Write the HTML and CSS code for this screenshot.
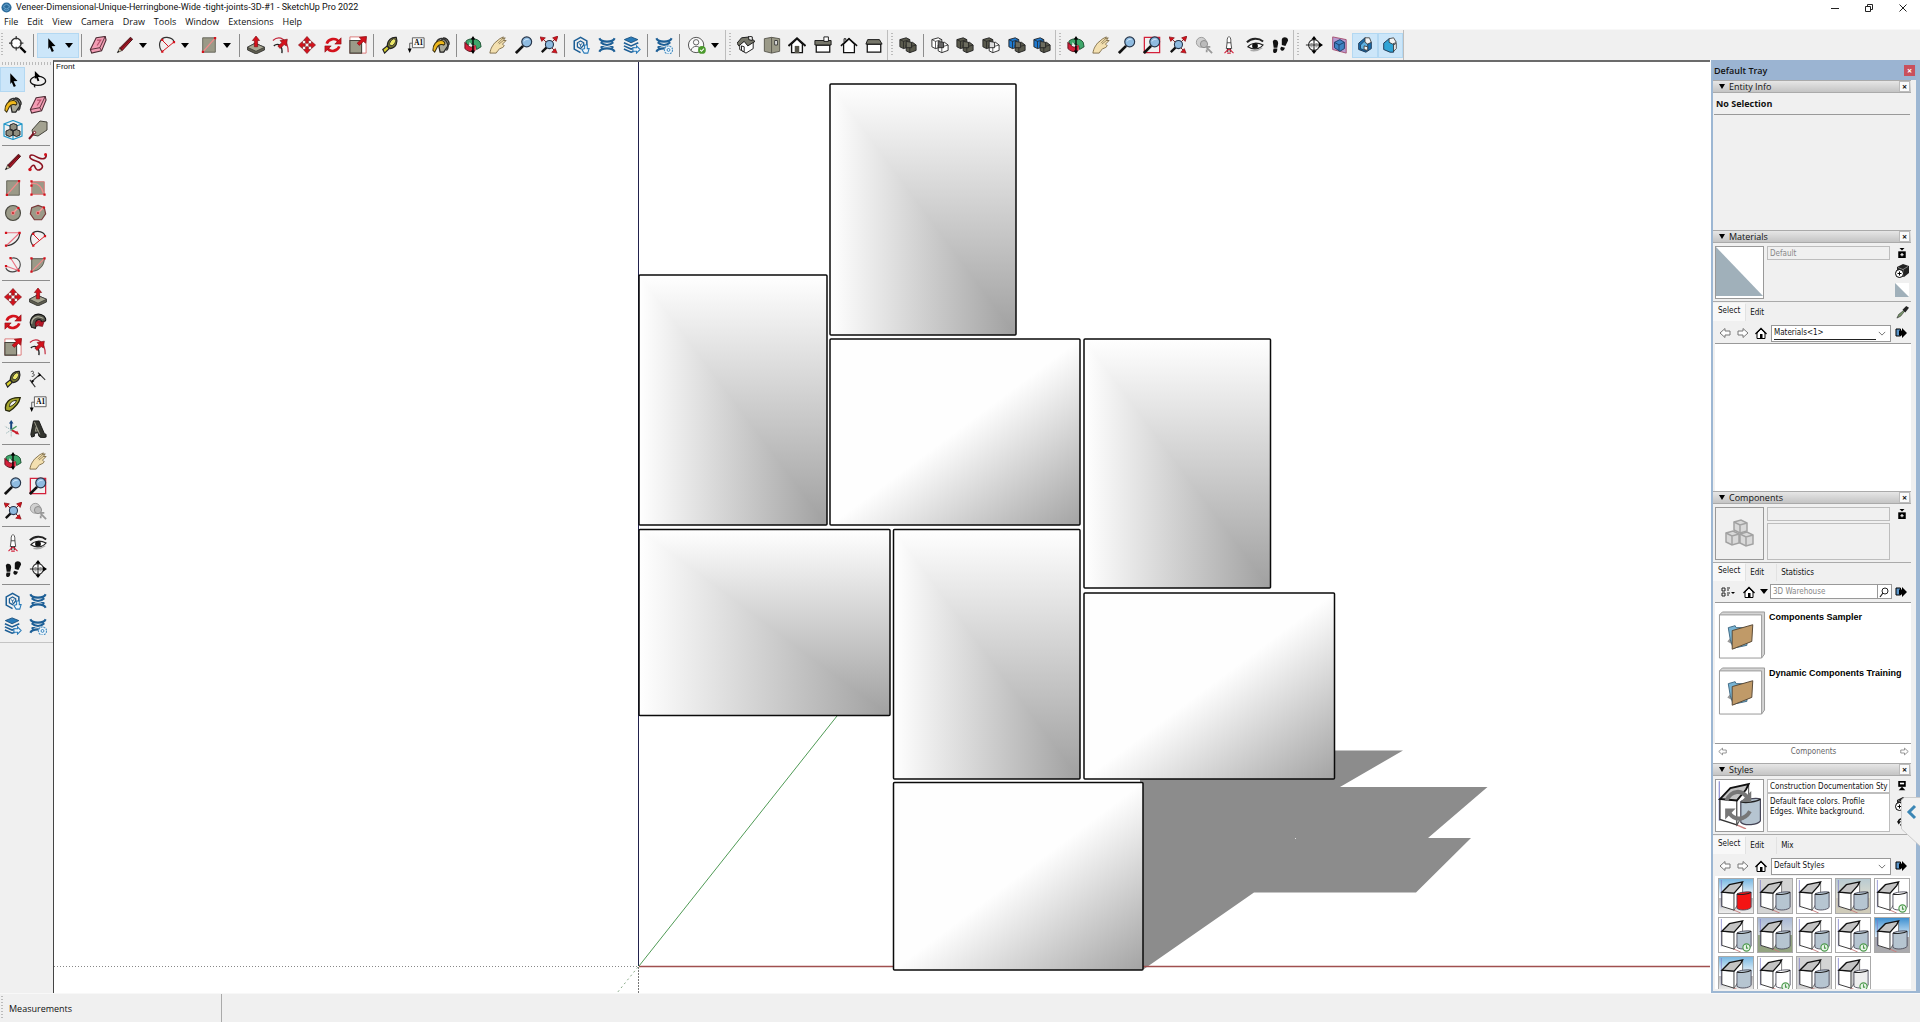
FILE: index.html
```
<!DOCTYPE html>
<html lang="en">
<head>
<meta charset="utf-8">
<title>Veneer-Dimensional-Unique-Herringbone-Wide -tight-joints-3D-#1 - SketchUp Pro 2022</title>
<link rel="stylesheet" href="styles.css">
</head>
<body>
<svg class="sprite" aria-hidden="true">
  <symbol id="search" viewBox="0 0 20 20"><circle cx="8" cy="8" r="5.500" fill="#fff" stroke="#333" stroke-width="1.600"/><path d="M8 0v4M8 12v4M0 8h4M12 8h4" stroke="#333" stroke-width="1.300"/><path d="M12.500 12.500l6 6" stroke="#000" stroke-width="2.600"/></symbol>
  <symbol id="arrow" viewBox="0 0 20 20"><path d="M7 2.500l8 8.500-4.300.4 2.500 5.300-2.300 1-2.300-5.200L7 14.500z" fill="#000"/></symbol>
  <symbol id="lasso" viewBox="0 0 20 20"><ellipse cx="10" cy="11" rx="8.500" ry="5" fill="none" stroke="#111" stroke-width="1.500"/><path d="M7 15c-1 1-2 2 0 3" fill="none" stroke="#111" stroke-width="1.300"/><path d="M6.500 0l6.500 6.500-3 .3 1.500 4-2 .7-1.500-4-1.500 1.500z" fill="#000"/></symbol>
  <symbol id="eraser" viewBox="0 0 20 20"><path d="M8 2l10-1.500 1 4-5 12L3 19l-1.500-4z" fill="#f29db4" stroke="#4d2a33" stroke-width="1.200"/><path d="M1.500 15l10.500-2L18 .5M12 13l2 3.500" fill="none" stroke="#4d2a33"/><path d="M9 4.500l4 0-4 6" fill="none" stroke="#b5526c" stroke-width="1.300"/></symbol>
  <symbol id="pencil" viewBox="0 0 20 20"><path d="M1.500 18.500l2.500-5 3 2.500z" fill="#d9c8a5" stroke="#333" stroke-width=".8"/><path d="M4 13.500L16 1.500l2.500 2L7 16z" fill="#b71525" stroke="#3a1115"/><path d="M15 2.500l2.500 2.200M5 14.500L16 3.500" stroke="#3a1115"/><path d="M1.500 18.500l1-2 1 1z" fill="#000"/></symbol>
  <symbol id="freehand" viewBox="0 0 20 20"><path d="M2 17c2-4 4-5 5-2s3 4 6 2c4-3-1-7-5-8C4 8 1 6 2 4c2-3 6 1 9 2 5 2 8 0 7-4" fill="none" stroke="#8c1220" stroke-width="1.600"/><circle cx="2" cy="17.500" r="1.700" fill="#d4121c"/><circle cx="17.500" cy="2.500" r="1.500" fill="#d4121c"/></symbol>
  <symbol id="rect" viewBox="0 0 20 20"><path d="M3 2h14v16H3z" fill="#9b9a88" stroke="#5f5e52"/><path d="M3 18L17 2" stroke="#f28a8a" stroke-width="1.400"/><path d="M2 16.500h2.500V19H2zM15.500 1H18v2.500h-2.500z" fill="#d4121c"/></symbol>
  <symbol id="rrect" viewBox="0 0 20 20"><path d="M3 3h14v14H3z" fill="#9b9a88" stroke="#d97070"/><path d="M3 5c7-1 11 3 13 11" fill="none" stroke="#f28a8a" stroke-width="1.500"/><path d="M1.500 1.500H4V4H1.500zM1.500 6H4v2.500H1.500zM1.500 16H4v2.500H1.500zM16 16h2.500v2.500H16z" fill="#d4121c"/></symbol>
  <symbol id="circle" viewBox="0 0 20 20"><circle cx="10" cy="10" r="8.300" fill="#9b9a88" stroke="#4c4b42" stroke-width="1.300"/><path d="M10 10l5.500-5.500" stroke="#ff9c9c" stroke-width="1.500"/><circle cx="10" cy="10" r="2" fill="none" stroke="#f28a8a"/><circle cx="10" cy="10" r="1" fill="#d4121c"/><circle cx="16" cy="4.500" r="1.400" fill="#d4121c"/></symbol>
  <symbol id="polygon" viewBox="0 0 20 20"><path d="M10 1.500l7 2.500 1.500 7-4.500 6.500H6L1.500 11 3 4z" fill="#9b9a88" stroke="#7a3a3a" stroke-width="1.300"/><path d="M10 10l6-6" stroke="#ff9c9c" stroke-width="1.500"/><circle cx="10" cy="10" r="2" fill="none" stroke="#f28a8a"/><circle cx="10" cy="10" r="1" fill="#d4121c"/><circle cx="16.500" cy="4" r="1.400" fill="#d4121c"/></symbol>
  <symbol id="arc1" viewBox="0 0 20 20"><path d="M17.500 3c0 8-7 14-15 14.500" fill="none" stroke="#333" stroke-width="1.300"/><path d="M2 3h15.500L2.500 17.500" fill="none" stroke="#e87080" stroke-width="1.200"/><path d="M1 2h2.500v2.500H1zM16 2h2.500v2.500H16zM1 16h2.500v2.500H1z" fill="#d4121c"/></symbol>
  <symbol id="arc2" viewBox="0 0 20 20"><path d="M4 17C-1 9 3 1 10 1.500c4 .3 7 2 8 5" fill="none" stroke="#333" stroke-width="1.300"/><path d="M4.500 17.500L18 6.500M4.500 4.500l7 7" fill="none" stroke="#d4121c" stroke-width="1.100"/><path d="M3.500 16h2.500v2.500H3.500zM16.500 5.500H19V8h-2.500zM3.500 3H6v2.500H3.500z" fill="#d4121c"/></symbol>
  <symbol id="arc3" viewBox="0 0 20 20"><path d="M8 2.500c8-2 12 5 9 11-4 6-12 5-15 0" fill="none" stroke="#444" stroke-width="1.200"/><path d="M7.500 2.500L16 16M2 11l14 5" stroke="#e87080" stroke-width="1.200"/><path d="M6 1h2.500v2.500H6zM1 10h2.500v2.500H1zM15 15h2.500v2.500H15z" fill="#d4121c"/></symbol>
  <symbol id="pie" viewBox="0 0 20 20"><path d="M3 3h14c0 8-6 14-14 14z" fill="#9b9a88" stroke="#4c4b42"/><path d="M3 17L17 3" stroke="#f28a8a" stroke-width="1.200"/><path d="M1.500 1.500H4V4H1.500zM16 1.500h2.500V4H16zM1.500 16H4v2.500H1.500z" fill="#d4121c"/></symbol>
  <symbol id="pushpull" viewBox="0 0 20 20"><path d="M.5 12.500L9 8l10.500 4.500v3L10 20 .5 15.500z" fill="#5f5e50" stroke="#222" stroke-width=".8"/><path d="M.5 12.500L9 8l10.500 4.500L10 17z" fill="#a8a792" stroke="#333" stroke-width=".8"/><path d="M10 0l4 5h-2.200V12H8.200V5H6z" fill="#d4121c" stroke="#7c0b12" stroke-width=".7"/></symbol>
  <symbol id="offset" viewBox="0 0 20 20"><path d="M1 5C8-1 18 3 18 18" fill="none" stroke="#c3283c" stroke-width="1.300"/><path d="M2 11c5-4 10 0 9 8" fill="none" stroke="#222" stroke-width="1.500"/><path d="M17 3.500l-1 7.500-2.500-1.500L9 14l-2.500-3L11 7.500 9 5z" fill="#d4121c" stroke="#7c0b12" stroke-width=".7"/></symbol>
  <symbol id="move" viewBox="0 0 20 20"><path id="mv" d="M10 .5l4 4.500h-2.500v3h-3V5H6z" fill="#d4121c" stroke="#7c0b12" stroke-width=".7"/><use href="#mv" transform="rotate(90 10 10)"/><use href="#mv" transform="rotate(180 10 10)"/><use href="#mv" transform="rotate(270 10 10)"/></symbol>
  <symbol id="rotate" viewBox="0 0 20 20"><path d="M3 8.500C5 3 13 1.500 16 6M17 11.500C15 17 7 18.500 4 14" fill="none" stroke="#d4121c" stroke-width="3"/><path d="M19 2v7h-7zM1 18v-7h7z" fill="#d4121c" stroke="#7c0b12" stroke-width=".6"/></symbol>
  <symbol id="scale" viewBox="0 0 20 20"><path d="M1 1h18v18H1z" fill="#fff" stroke="#d97070"/><path d="M1 5h13v14H1z" fill="#9b9a88" stroke="#44433b" stroke-width="1.200"/><path d="M19.500.5l-1 7.500-2.500-2-4.500 4.500-2.500-2.500L13.500 4l-2-2.500z" fill="#d4121c" stroke="#7c0b12" stroke-width=".7"/></symbol>
  <symbol id="followme" viewBox="0 0 20 20"><path d="M3 16C-2 7 6-1 14 2c5 2 5 6 4 7l-4 1c0-4-8-4-6 4l-1 3z" fill="#55564c" stroke="#111" stroke-width="1.200"/><path d="M3 12C3 5 9 2 16 6" fill="none" stroke="#b9b9a7" stroke-width="1.200"/><path d="M7 14c-1-6 5-7 7-4l3-1-2 6-6-1 2-2c-1-1-2 0-2 3z" fill="#b71525" stroke="#4d0910" stroke-width=".6"/></symbol>
  <symbol id="tape" viewBox="0 0 20 20"><path d="M2 15l5-4 2 3-5 5z" fill="#d8d12c" stroke="#222" stroke-width="1.300"/><path d="M7 11C7 4 12 1 17 1.500 19 7 17 13 10 14z" fill="#77772d" stroke="#222" stroke-width="1.300"/><ellipse cx="13" cy="7" rx="2.600" ry="4.500" transform="rotate(38 13 7)" fill="#ece86a" stroke="#333"/></symbol>
  <symbol id="text" viewBox="0 0 20 20"><path d="M6 2h13v11H6z" fill="#f8f8f8" stroke="#555"/><path d="M6 8H3v7" fill="none" stroke="#555"/><path d="M.8 14h4.400L3 19z" fill="#000"/><text x="8" y="10.500" font-family="Liberation Serif,serif" font-weight="bold" font-size="8">A1</text></symbol>
  <symbol id="paint" viewBox="0 0 20 20"><path d="M7 8l6-6c3 0 6 3 6 7l-6 9H9z" fill="#aaa99a" stroke="#222" stroke-width="1.400"/><path d="M5 7c2-5 8-6 11-1s2 8 0 10" fill="none" stroke="#333" stroke-width="1.600"/><path d="M10 5c-5 0-9 4-9 11l2 2 3-6c2-3 6-3 7-2 3-2 0-5-3-5z" fill="#efb81c" stroke="#3d3210" stroke-width="1.200"/></symbol>
  <symbol id="comp" viewBox="0 0 20 20"><path d="M10 .5l9 3.500v12L10 19.500 1 16V4zM1 4l9 3 9-3M10 7v12" fill="none" stroke="#2298c9" stroke-width="1.200"/><path d="M7 5l3.500-1.500L14 5v4l-3.500 1.500L7 9zM3 11l3.500-1.500L10 11v4l-3.500 1.500L3 15zM10 11l3.500-1.500L17 11v4l-3.500 1.500L10 15z" fill="#908f80" stroke="#222"/></symbol>
  <symbol id="tag" viewBox="0 0 20 20"><path d="M4 10L12 1l7 1v8l-9 6-5-1z" fill="#a3a291" stroke="#44433b"/><path d="M1 19l5-6" stroke="#7c1220" stroke-width="2"/><circle cx="6.500" cy="12.500" r="1.200" fill="#fff" stroke="#7c1220"/></symbol>
  <symbol id="dims" viewBox="0 0 20 20"><path d="M3 13l9-8M1 11l6 8M10 3l8 8" stroke="#333" stroke-width="1.200"/><path d="M3 11l3 1-3 3zM12 3.500l1.500 3-4 1z" fill="#000"/><path d="M2 2c3-2 4 1 2 2 3 0 2 4-1 3" fill="none" stroke="#333"/></symbol>
  <symbol id="protractor" viewBox="0 0 20 20"><path d="M2 17C0 9 6 2 18 3c-1 5-4 10-12 15z" fill="#a7a72e" stroke="#26260b" stroke-width="1.500"/><path d="M6 13c0-4 3-7 8-7-1 3-4 6-8 7z" fill="#f0f0f0" stroke="#26260b"/></symbol>
  <symbol id="axes" viewBox="0 0 20 20"><path d="M8 11V3" stroke="#16457f" stroke-width="2.200"/><path d="M8 0l2.500 4h-5z" fill="#16457f"/><path d="M8 11l6 3" stroke="#c81c2a" stroke-width="2"/><path d="M17 16l-4.500-.5 2-3.500z" fill="#c81c2a"/><path d="M8 11l6-4" stroke="#4b9b5d" stroke-width="1.500"/><path d="M8 11v8M8 11L1 7M8 11l-6 4" stroke="#8aa" stroke-dasharray="1.500 1"/></symbol>
  <symbol id="a3d" viewBox="0 0 20 20"><path d="M5 1h6l6 14 2 1v3l-5 1-3-2-1-4-4 1v3l-3 1-1-3z" fill="#34352f" stroke="#111"/><path d="M6 2l6 14M8 8l2 4-3 .5z" fill="none" stroke="#a3a291"/></symbol>
  <symbol id="orbit" viewBox="0 0 20 20"><path d="M2 6c3-4 13-4 16 1l1 5-5 3-1-4C9 8 6 8 4 11z" fill="#3fa76b" stroke="#174a2b"/><path d="M1 7l3 3c3 3 5 3 6 1v6c-3 1-6 0-9-3z" fill="#d4203a" stroke="#5b0d18"/><path d="M10 11l3-1v6l-3 1z" fill="#d4203a"/><path d="M10 2v16" stroke="#000" stroke-width="1.500"/><path d="M10 0l2.500 4h-5zM10 20l2.500-4h-5z" fill="#000"/><path d="M6 7l2 2-2 2z" fill="#fff"/></symbol>
  <symbol id="pan" viewBox="0 0 20 20"><path d="M1 19c1-6 3-8 5-11l6-5 4-2-1 2 3-1-2 3 3 0-4 4 2 2c-2 3-5 2-7 5l-2 3z" fill="#f3e0b0" stroke="#7c6a45"/><path d="M10 8l5-5M11 9l5-4" stroke="#7c6a45" stroke-width=".8"/></symbol>
  <symbol id="zoom" viewBox="0 0 20 20"><path d="M9 11l-8 8" stroke="#111" stroke-width="3"/><circle cx="13" cy="6.500" r="5.500" fill="#8fbbe0" stroke="#26354a" stroke-width="1.300"/><path d="M10 6c1-2 3-3 5-2" fill="none" stroke="#dceeff"/></symbol>
  <symbol id="zoomwin" viewBox="0 0 20 20"><path d="M1.500 1.500h17v17h-17z" fill="none" stroke="#d4203a" stroke-width="1.400"/><use href="#zoom"/></symbol>
  <symbol id="extents" viewBox="0 0 20 20"><path d="M8 12l-6 6" stroke="#111" stroke-width="2.600"/><path d="M3 3l14 14M17 3l-4 4" stroke="#7c0b12"/><circle cx="10.500" cy="9.500" r="4.500" fill="#8fbbe0" stroke="#26354a" stroke-width="1.200"/><path d="M0 1l6 1-4 4zM20 0l-6 2 4 4zM19 19l-6-1 4-4z" fill="#d4121c" stroke="#7c0b12" stroke-width=".7"/></symbol>
  <symbol id="prev" viewBox="0 0 20 20"><circle cx="7" cy="7" r="5.500" fill="#d0d0d0" stroke="#999"/><circle cx="10" cy="9" r="4" fill="#bbb" stroke="#888"/><path d="M13 13l6 6M12 12l5 0M13 15l0 3" stroke="#999" stroke-width="2"/></symbol>
  <symbol id="position" viewBox="0 0 20 20"><path d="M8 7c0-2-.5-5 2-6.500 2.500 1.500 2 4.500 2 6.500l1 7H7z" fill="#fff" stroke="#444"/><path d="M7.500 7.500h5" stroke="#444"/><path d="M8.500 13.500v4M11.500 13.500v4" stroke="#222" stroke-width="1.500"/><path d="M5 19l4-4 2 0 4 4M8 19h4" fill="none" stroke="#d4203a" stroke-width="1.200"/></symbol>
  <symbol id="look" viewBox="0 0 20 20"><path d="M1 7C6 2 14 2 19 6" fill="none" stroke="#222" stroke-width="2.200"/><path d="M2 12c4-5 11-5 17-2-4 5-11 6-17 2z" fill="#fff" stroke="#222" stroke-width="1.200"/><circle cx="10" cy="11" r="3.200" fill="#111"/><path d="M5 16c4 1 9 0 13-3" stroke="#aaa" stroke-width="1.500" fill="none"/></symbol>
  <symbol id="walk" viewBox="0 0 20 20"><path d="M2 6c1-3 6-2 6 2l-1 5H3zM3 14h4c0 4-1 5-3 5s-2-3-1-5zM12 4c1-4 7-3 7 1l-3 6-4-1zM11.500 12l4 1c-1 3-2 4-4 3s-1-3 0-4z" fill="#111"/></symbol>
  <symbol id="section" viewBox="0 0 20 20"><circle cx="10" cy="10" r="6" fill="#fff" stroke="#222" stroke-width="1.200"/><path d="M1 10h17M10 3v14" stroke="#222" stroke-width="1.200"/><path d="M20 10l-4.500-3v6zM10 0l3 4H7zM10 20l3-4H7z" fill="#000"/><path d="M6 8.500h2.500M11.500 8.500H14M6 12h2.500M11.500 12H14" stroke="#777"/></symbol>
  <symbol id="wh" viewBox="0 0 20 20"><path d="M16.500 10V5.500L9.500 1.500 2.500 5.500v9l7 4" fill="none" stroke="#1d5f96" stroke-width="1.700"/><path d="M13 10V7.500l-3.500-2-3.500 2V12l3.500 2z" fill="none" stroke="#1d5f96" stroke-width="1.400"/><path d="M7.500 8.500l2 1 2-1M9.500 9.500v2.500" stroke="#1d5f96" fill="none"/><path d="M14 10h3v4h2l-1.500 5h-4L11 15l3-1z" fill="#eef6fc" stroke="#2a7bb8" stroke-width="1.200"/></symbol>
  <symbol id="ext" viewBox="0 0 20 20"><path d="M1.500 2.500c2 5 15 5 17 0M3 7c4 4 10 4 14 0M3 13c4-4 10-4 14 0M1.500 17.500c2-5 15-5 17 0" fill="none" stroke="#1d5f96" stroke-width="2.300"/></symbol>
  <symbol id="layers" viewBox="0 0 20 20"><path d="M9 1l7.500 3L9 7.500 1.500 4z" fill="#2a7bb8" stroke="#174f7e"/><path d="M1 7.500l8 3.500 8-3.500M1 11l8 3.500 4-1.500M1 14.500l8 3.500 3-1" fill="none" stroke="#1d5f96" stroke-width="1.700"/><path d="M11 13h4v-2l4 4-4 4v-2h-4z" fill="#eef6fc" stroke="#2a7bb8" stroke-width="1.200"/></symbol>
  <symbol id="extmgr" viewBox="0 0 20 20"><use href="#ext"/><circle cx="15" cy="15.500" r="4.500" fill="#eef6fc" stroke="#4a8fc1" stroke-width="1.300" stroke-dasharray="2.200 .9"/><circle cx="15" cy="15.500" r="1.600" fill="none" stroke="#2a7bb8"/></symbol>
  <symbol id="account" viewBox="0 0 20 20"><circle cx="9" cy="10" r="8.500" fill="#fafafa" stroke="#555" stroke-width="1.100"/><circle cx="9" cy="7" r="3" fill="none" stroke="#555"/><path d="M3.500 16c1-6 10-6 11 0" fill="none" stroke="#555"/><circle cx="15.500" cy="15.500" r="4.300" fill="#4b9a2d"/><path d="M13.500 15.500l1.500 1.500 2.700-3" fill="none" stroke="#fff" stroke-width="1.200"/></symbol>
  <symbol id="iso" viewBox="0 0 20 20"><path d="M3 8v7l7 4 8-5V7l-7-3z" fill="#fff" stroke="#111"/><path d="M0 8l5-6 9-1 6 5-8 5-4-5-6 5z" fill="#77776b" stroke="#111"/><path d="M13 0l4 1v4l-4-1z" fill="#eee" stroke="#111"/><path d="M5 11v5l3 1.500V12z" fill="#fff" stroke="#111"/></symbol>
  <symbol id="topv" viewBox="0 0 20 20"><path d="M1.500 3l8-1.500 9 1.500v14l-9 2-8-2z" fill="#9b9a88" stroke="#55544a"/><path d="M9.500 1.500V19" stroke="#55544a"/><path d="M13 5h3v5h-3z" fill="#eee" stroke="#333"/></symbol>
  <symbol id="frontv" viewBox="0 0 20 20"><path d="M4 9v9.500h12V9l-6-6z" fill="#fff" stroke="#111" stroke-width="1.500"/><path d="M.5 11L10 2.500 19.500 11" fill="none" stroke="#111" stroke-width="2.200"/><path d="M7.500 11h5v8h-5z" fill="#55544a"/></symbol>
  <symbol id="rightv" viewBox="0 0 20 20"><path d="M2.500 10h15v8h-15z" fill="#fff" stroke="#111" stroke-width="1.400"/><path d="M1 5h18v5H1z" fill="#77776b" stroke="#111"/><path d="M11 1h5v5h-5z" fill="#fff" stroke="#111"/></symbol>
  <symbol id="backv" viewBox="0 0 20 20"><path d="M4 9v9.500h12V9l-6-6z" fill="#fff" stroke="#111" stroke-width="1.400"/><path d="M1 11l9-8 9 8" fill="none" stroke="#111" stroke-width="1.600"/><path d="M4.500 7V3h2v2" fill="none" stroke="#111"/></symbol>
  <symbol id="leftv" viewBox="0 0 20 20"><path d="M2.500 9h15v9h-15z" fill="#fff" stroke="#111" stroke-width="1.400"/><path d="M3 4h13l3 5H1z" fill="#77776b" stroke="#111"/></symbol>
  <symbol id="solid" viewBox="0 0 20 20"><path d="M1 4l7-2 4 2v8l-7 2-4-2z" fill="var(--a,#5a5a4d)" stroke="#222"/><path d="M8 10l7-3 4 3v6l-7 2.500-4-2z" fill="var(--b,#5a5a4d)" stroke="#222"/><path d="M8 10l4 2 7-2M12 12v6.500M1 4l4 2 7-2M5 6v8" fill="none" stroke="#222" stroke-width=".8"/><path d="M8 6l6 1v6H8z" fill="var(--c,#6c6c5f)" stroke="#222"/></symbol>
  <symbol id="disp" viewBox="0 0 20 20"><path d="M3 1l15 3v15L3 15z" fill="#b79bd0" stroke="#a44a6b"/><path d="M5 7l6-3 5 3v7l-5 3-6-4z" fill="#3f83c4" stroke="#1b3c66"/><path d="M5 7l5 3 6-3M10 10v6" fill="none" stroke="#1b3c66"/></symbol>
  <symbol id="cuts" viewBox="0 0 20 20"><path d="M3 8l7-6 7 5v7l-6 4-8-3z" fill="#1b6fae" stroke="#16304d"/><path d="M5 10l5-5 3 2v8l-3 1-5-2z" fill="#5fb0e0" stroke="#16304d" stroke-width=".8"/><path d="M10 2l5 0 2 5-4 2-3-2zM9 11l4 1v4l-4-1z" fill="#f3f3f3" stroke="#333" stroke-width=".9"/></symbol>
  <symbol id="cutfill" viewBox="0 0 20 20"><path d="M3 8l6-5 5 4v11l-4 0-7-3z" fill="#2fa4d6" stroke="#16304d"/><path d="M9 3l5-1 3 5-4 2-4-2zM14 10l3-2v6l-3 3z" fill="#f3f3f3" stroke="#333" stroke-width=".9"/></symbol>
  <symbol id="navback" viewBox="0 0 12 12"><path d="M1 6l5-4.500V4h5v4H6v2.500z" fill="#fdfdfd" stroke="#777"/></symbol>
  <symbol id="navfwd" viewBox="0 0 12 12"><path d="M11 6L6 1.500V4H1v4h5v2.500z" fill="#fdfdfd" stroke="#777"/></symbol>
  <symbol id="home" viewBox="0 0 12 12"><path d="M2 6v5.500h8V6L6 2z" fill="#fff" stroke="#000"/><path d="M.5 7L6 1.500 11.500 7" fill="none" stroke="#000" stroke-width="1.400"/><path d="M5 7h2.500v4.500H5z" fill="#000"/></symbol>
  <symbol id="details" viewBox="0 0 12 12"><path d="M1 2h4.500v7H1z" fill="#5a94c8" stroke="#000"/><path d="M4 3.500h3V1l5 5-5 5V8.500H4z" fill="#000"/></symbol>
  <symbol id="pinbox" viewBox="0 0 12 12"><path d="M3 0h6L6 3z" fill="#000"/><path d="M1.500 4h9v8h-9z" fill="#000"/><path d="M4 8h4M6 6v4" stroke="#fff" stroke-width="1.300"/></symbol>
  <symbol id="cubeplus" viewBox="0 0 14 14"><path d="M2 3l6-3 6 2v7l-5 4-7-3z" fill="#222"/><path d="M3 3.500l5 2 5-3M8 5v7" stroke="#999" fill="none" stroke-width=".8"/><circle cx="4.500" cy="9.500" r="4" fill="#fff" stroke="#000"/><path d="M2.500 9.500h4M4.500 7.500v4" stroke="#000"/></symbol>
  <symbol id="dropper" viewBox="0 0 14 14"><path d="M1 13l2-4 5-4 1 1-4 5z" fill="#7a9a6b" stroke="#333" stroke-width=".7"/><path d="M7 4l4-4 3 2-4 5z" fill="#222"/></symbol>
  <symbol id="monitor" viewBox="0 0 12 12"><path d="M1.500 0h9v7h-9z" fill="#000"/><path d="M3.500 2h5v2h-5z" fill="#fff"/><path d="M6 7l4 4H2z" fill="#000"/></symbol>
  <symbol id="refresh" viewBox="0 0 12 12"><path d="M2 7C1 3 5 1 8 3M10 6c1 3-4 5-6 3" fill="none" stroke="#111" stroke-width="1.800"/><path d="M0 5h5L2 9z" fill="#111"/></symbol>
  <symbol id="cubes" viewBox="0 0 30 30"><g fill="#d9d9d9" stroke="#a2a2a2" stroke-width="1.500"><path d="M9 3l7-2 6 3v8l-7 2-6-3z"/><path d="M9 3l6 3 7-2M15 6v8" fill="none"/><path d="M1 14l7-2 6 3v9l-7 2-6-3zM15 15l7-2 6 3v9l-7 2-6-3z"/><path d="M1 14l6 3 7-2M7 17v9M15 15l6 3 7-2M21 18v9" fill="none"/></g></symbol>
  <symbol id="folder" viewBox="0 0 48 50"><path d="M1 4l3-3h43v43l-3 4z" fill="#d5d5d5" stroke="#999"/><path d="M1 4h43v44H1z" fill="#fff" stroke="#999"/><path d="M9 31l7-8 3 14z" fill="#999"/><path d="M10 17l7-2 1 2 11 0v18l-14 3-3-9z" fill="#77b4d4" stroke="#426b85"/><path d="M14 20l21-6-1 17-20 8z" fill="#c09a68" stroke="#594a37"/></symbol>
  <symbol id="model" viewBox="0 0 36 36"><path d="M2.500 30V1" stroke="#7b7bc9" stroke-width=".8"/><path d="M9 30l14 6" stroke="#c98080" stroke-width="1"/><path d="M3 14l13 1v18L3 29z" fill="#fff" stroke="#333"/><path d="M16 15l9-11v15l-9 14z" fill="var(--side,#fff)" stroke="#555" stroke-width=".8"/><path d="M3 14L11 6l14-3-2 4-7 8z" fill="#c4c4c4" stroke="#111" stroke-width="1.400"/><path d="M19 16c2-2 12-3 15-2v16c-2 3-12 4-15 1z" fill="var(--cyl,#b6c5d1)" stroke="#445" stroke-width=".9"/><path d="M19 16c4 1 12 0 15-2" fill="none" stroke="#222" stroke-width="1.200"/></symbol>
  <symbol id="clock" viewBox="0 0 8 8"><circle cx="4" cy="4" r="3.200" fill="#eaf6ea" stroke="#4d9a4d"/><path d="M4 2v2.500h1.500" fill="none" stroke="#4d9a4d"/></symbol>
  <symbol id="chev" viewBox="0 0 10 6"><path d="M1 1l4 4 4-4" fill="none" stroke="#555"/></symbol>
</svg>

<header class="titlebar">
  <svg class="logo" viewBox="0 0 12 12" aria-hidden="true"><circle cx="6" cy="6" r="5.500" fill="#2c6c9c"/><path d="M3 4l3-1.500L9 4v2L6 7.500 3 6zM3 8l3 1.500L9 8" fill="none" stroke="#6fa9d2"/></svg>
  <h1>Veneer-Dimensional-Unique-Herringbone-Wide -tight-joints-3D-#1 - SketchUp Pro 2022</h1>
  <div class="winbtns">
    <button aria-label="Minimize"><svg viewBox="0 0 10 10"><path d="M1 5.500h8" stroke="#222"/></svg></button>
    <button aria-label="Restore"><svg viewBox="0 0 10 10"><path d="M1.500 3.500h5v5h-5zM3.500 3V1.500h5v5H7" fill="none" stroke="#222"/></svg></button>
    <button aria-label="Close window"><svg viewBox="0 0 10 10"><path d="M1.500 1.500l7 7M8.500 1.500l-7 7" stroke="#222"/></svg></button>
  </div>
</header>

<nav class="menubar" aria-label="Main menu">
  <button>File</button><button>Edit</button><button>View</button><button>Camera</button><button>Draw</button><button>Tools</button><button>Window</button><button>Extensions</button><button>Help</button>
</nav>

<div class="toolbars">
  <div class="bar" role="toolbar" aria-label="Getting started">
    <i class="grip first"></i>
    <div class="n1"><button aria-label="Search"><svg><use href="#search"/></svg></button></div>
    <i class="sep"></i>
    <div class="split on"><button aria-label="Select"><svg><use href="#arrow"/></svg></button><button class="caret" aria-label="Select options"></button></div>
    <i class="sep"></i>
    <div class="n1"><button aria-label="Eraser"><svg><use href="#eraser"/></svg></button></div>
    <div class="split"><button aria-label="Line"><svg><use href="#pencil"/></svg></button><button class="caret" aria-label="Line options"></button></div>
    <div class="split"><button aria-label="Arc"><svg><use href="#arc2"/></svg></button><button class="caret" aria-label="Arc options"></button></div>
    <div class="split"><button aria-label="Rectangle"><svg><use href="#rect"/></svg></button><button class="caret" aria-label="Rectangle options"></button></div>
    <i class="sep"></i>
    <div class="n5">
      <button aria-label="Push/Pull"><svg><use href="#pushpull"/></svg></button>
      <button aria-label="Offset"><svg><use href="#offset"/></svg></button>
      <button aria-label="Move"><svg><use href="#move"/></svg></button>
      <button aria-label="Rotate"><svg><use href="#rotate"/></svg></button>
      <button aria-label="Scale"><svg><use href="#scale"/></svg></button>
    </div>
    <i class="sep"></i>
    <div class="n3">
      <button aria-label="Tape Measure"><svg><use href="#tape"/></svg></button>
      <button aria-label="Text"><svg><use href="#text"/></svg></button>
      <button aria-label="Paint Bucket"><svg><use href="#paint"/></svg></button>
    </div>
    <i class="sep"></i>
    <div class="n4">
      <button aria-label="Orbit"><svg><use href="#orbit"/></svg></button>
      <button aria-label="Pan"><svg><use href="#pan"/></svg></button>
      <button aria-label="Zoom"><svg><use href="#zoom"/></svg></button>
      <button aria-label="Zoom Extents"><svg><use href="#extents"/></svg></button>
    </div>
    <i class="sep"></i>
    <div class="n3">
      <button aria-label="3D Warehouse"><svg><use href="#wh"/></svg></button>
      <button aria-label="Extension Warehouse"><svg><use href="#ext"/></svg></button>
      <button aria-label="Send to LayOut"><svg><use href="#layers"/></svg></button>
    </div>
    <i class="sep"></i>
    <div class="n1"><button aria-label="Extension Manager"><svg><use href="#extmgr"/></svg></button></div>
    <i class="sep"></i>
    <div class="split"><button aria-label="Account"><svg><use href="#account"/></svg></button><button class="caret" aria-label="Account options"></button></div>
  </div>
  <div class="bar" role="toolbar" aria-label="Views">
    <i class="grip"></i>
    <div class="n6">
      <button aria-label="Iso"><svg><use href="#iso"/></svg></button>
      <button aria-label="Top"><svg><use href="#topv"/></svg></button>
      <button aria-label="Front view"><svg><use href="#frontv"/></svg></button>
      <button aria-label="Right"><svg><use href="#rightv"/></svg></button>
      <button aria-label="Back"><svg><use href="#backv"/></svg></button>
      <button aria-label="Left"><svg><use href="#leftv"/></svg></button>
    </div>
  </div>
  <div class="bar" role="toolbar" aria-label="Solid tools">
    <i class="grip"></i>
    <div class="n1"><button aria-label="Outer Shell"><svg><use href="#solid"/></svg></button></div>
    <i class="sep"></i>
    <div class="n5">
      <button aria-label="Intersect"><svg class="s-int"><use href="#solid"/></svg></button>
      <button aria-label="Union"><svg><use href="#solid"/></svg></button>
      <button aria-label="Subtract"><svg class="s-sub"><use href="#solid"/></svg></button>
      <button aria-label="Trim"><svg class="s-trim"><use href="#solid"/></svg></button>
      <button aria-label="Split"><svg class="s-trim"><use href="#solid"/></svg></button>
    </div>
  </div>
  <div class="bar" role="toolbar" aria-label="Camera">
    <i class="grip"></i>
    <div class="n9">
      <button aria-label="Orbit"><svg><use href="#orbit"/></svg></button>
      <button aria-label="Pan"><svg><use href="#pan"/></svg></button>
      <button aria-label="Zoom"><svg><use href="#zoom"/></svg></button>
      <button aria-label="Zoom Window"><svg><use href="#zoomwin"/></svg></button>
      <button aria-label="Zoom Extents"><svg><use href="#extents"/></svg></button>
      <button aria-label="Previous"><svg><use href="#prev"/></svg></button>
      <button aria-label="Position Camera"><svg><use href="#position"/></svg></button>
      <button aria-label="Look Around"><svg><use href="#look"/></svg></button>
      <button aria-label="Walk"><svg><use href="#walk"/></svg></button>
    </div>
  </div>
  <div class="bar" role="toolbar" aria-label="Section">
    <i class="grip"></i>
    <div class="n4">
      <button aria-label="Section Plane"><svg><use href="#section"/></svg></button>
      <button aria-label="Display Section Planes"><svg><use href="#disp"/></svg></button>
      <button class="on" aria-label="Display Section Cuts"><svg><use href="#cuts"/></svg></button>
      <button class="on" aria-label="Display Section Fill"><svg><use href="#cutfill"/></svg></button>
    </div>
  </div>
</div>

<div class="workspace">
  <aside class="palette" role="toolbar" aria-label="Large tool set">
    <i class="grip-h"></i>
    <div class="r3">
      <button class="on" aria-label="Select"><svg><use href="#arrow"/></svg></button>
      <button aria-label="Lasso"><svg><use href="#lasso"/></svg></button>
      <button aria-label="Paint Bucket"><svg><use href="#paint"/></svg></button>
      <button aria-label="Eraser"><svg><use href="#eraser"/></svg></button>
      <button aria-label="Make Component"><svg class="big"><use href="#comp"/></svg></button>
      <button aria-label="Tag"><svg class="big"><use href="#tag"/></svg></button>
    </div>
    <hr>
    <div class="r5">
      <button aria-label="Line"><svg><use href="#pencil"/></svg></button>
      <button aria-label="Freehand"><svg class="big"><use href="#freehand"/></svg></button>
      <button aria-label="Rectangle"><svg><use href="#rect"/></svg></button>
      <button aria-label="Rotated Rectangle"><svg><use href="#rrect"/></svg></button>
      <button aria-label="Circle"><svg><use href="#circle"/></svg></button>
      <button aria-label="Polygon"><svg><use href="#polygon"/></svg></button>
      <button aria-label="Arc"><svg><use href="#arc1"/></svg></button>
      <button aria-label="2 Point Arc"><svg><use href="#arc2"/></svg></button>
      <button aria-label="3 Point Arc"><svg><use href="#arc3"/></svg></button>
      <button aria-label="Pie"><svg><use href="#pie"/></svg></button>
    </div>
    <hr>
    <div class="r3">
      <button aria-label="Move"><svg><use href="#move"/></svg></button>
      <button aria-label="Push/Pull"><svg><use href="#pushpull"/></svg></button>
      <button aria-label="Rotate"><svg><use href="#rotate"/></svg></button>
      <button aria-label="Follow Me"><svg><use href="#followme"/></svg></button>
      <button aria-label="Scale"><svg><use href="#scale"/></svg></button>
      <button aria-label="Offset"><svg><use href="#offset"/></svg></button>
    </div>
    <hr>
    <div class="r3">
      <button aria-label="Tape Measure"><svg><use href="#tape"/></svg></button>
      <button aria-label="Dimensions"><svg><use href="#dims"/></svg></button>
      <button aria-label="Protractor"><svg><use href="#protractor"/></svg></button>
      <button aria-label="Text"><svg><use href="#text"/></svg></button>
      <button aria-label="Axes"><svg><use href="#axes"/></svg></button>
      <button aria-label="3D Text"><svg><use href="#a3d"/></svg></button>
    </div>
    <hr>
    <div class="r3">
      <button aria-label="Orbit"><svg><use href="#orbit"/></svg></button>
      <button aria-label="Pan"><svg><use href="#pan"/></svg></button>
      <button aria-label="Zoom"><svg><use href="#zoom"/></svg></button>
      <button aria-label="Zoom Window"><svg><use href="#zoomwin"/></svg></button>
      <button aria-label="Zoom Extents"><svg><use href="#extents"/></svg></button>
      <button aria-label="Previous"><svg><use href="#prev"/></svg></button>
    </div>
    <hr>
    <div class="r2">
      <button aria-label="Position Camera"><svg><use href="#position"/></svg></button>
      <button aria-label="Look Around"><svg><use href="#look"/></svg></button>
      <button aria-label="Walk"><svg><use href="#walk"/></svg></button>
      <button aria-label="Section Plane"><svg><use href="#section"/></svg></button>
    </div>
    <hr>
    <div class="r2 last">
      <button aria-label="3D Warehouse"><svg><use href="#wh"/></svg></button>
      <button aria-label="Extension Warehouse"><svg><use href="#ext"/></svg></button>
      <button aria-label="Send to LayOut"><svg><use href="#layers"/></svg></button>
      <button aria-label="Extension Manager"><svg><use href="#extmgr"/></svg></button>
    </div>
  </aside>

  <main class="viewport">
    <span class="viewname">Front</span>
    <svg class="scene" viewBox="54 62 1656 931" preserveAspectRatio="xMinYMin meet" role="img" aria-label="Front view of eight veneer tiles">
      <defs>
        <linearGradient id="gv" x2="0" y2="1"><stop offset="0" stop-color="#fff"/><stop offset="1" stop-color="#a0a0a0"/></linearGradient>
        <linearGradient id="gh"><stop offset="0" stop-color="#fff"/><stop offset="1" stop-color="#a0a0a0"/></linearGradient>
        <linearGradient id="gd" x1=".5" y1=".5" x2="1" y2="1"><stop offset="0" stop-color="#fefefe"/><stop offset="1" stop-color="#a3a3a3"/></linearGradient>
      </defs>
      <path d="M1140 779H1334V750.500H1403L1340 787H1487.500L1428 838H1471L1416 892.500H1254L1144 969H1140z" fill="#8c8c8c"/>
      <path d="M1295 838h1v1h-1z" fill="#ddd"/>
      <path d="M638.500 62V966" stroke="#22224d"/>
      <path d="M639 966.500H1710" stroke="#a0504f" stroke-width="1.500"/>
      <path d="M639 966L837 716" stroke="#4f9a55"/>
      <path d="M54 966.500H638" stroke="#888" stroke-dasharray="1 2"/>
      <path d="M638.500 967V993" stroke="#777" stroke-dasharray="2 1"/>
      <path d="M638 967L617 993" stroke="#8a8" stroke-dasharray="2 3"/>
      <g stroke="none">
        <path d="M830 84h186v251H830z" fill="url(#gv)"/><path d="M830 84L1016 335H830z" fill="url(#gh)"/>
        <path d="M639 275h188v250H639z" fill="url(#gv)"/><path d="M639 275L827 525H639z" fill="url(#gh)"/>
        <path d="M1084 339h186v249h-186z" fill="url(#gv)"/><path d="M1084 339L1270 588h-186z" fill="url(#gh)"/>
        <path d="M639 529h251v187H639z" fill="url(#gv)"/><path d="M639 529L890 716H639z" fill="url(#gh)"/>
        <path d="M893 529h187v250H893z" fill="url(#gv)"/><path d="M893 529L1080 779H893z" fill="url(#gh)"/>
        <path d="M830 339h250v186H830z" fill="url(#gd)"/>
        <path d="M1084 593h250v186h-250z" fill="url(#gd)"/>
        <path d="M893 782h250v188H893z" fill="url(#gd)"/>
      </g>
      <g fill="none" stroke="#0a0a0a" stroke-width="1.500">
        <rect x="830" y="84" width="186" height="251" rx="1"/>
        <rect x="639" y="275" width="188" height="250" rx="1"/>
        <rect x="830" y="339" width="250" height="186" rx="1"/>
        <rect x="1084" y="339" width="186.500" height="249" rx="1"/>
        <rect x="639" y="529.500" width="251" height="186" rx="1"/>
        <rect x="893.500" y="529.500" width="186.500" height="249.500" rx="1"/>
        <rect x="1084" y="593" width="250.500" height="186" rx="1"/>
        <rect x="893.500" y="782.500" width="249.500" height="187.500" rx="1"/>
      </g>
    </svg>
  </main>

  <aside class="tray">
    <div class="tray-title"><h2>Default Tray</h2><button class="x red" aria-label="Close tray">×</button></div>
    <div class="tray-body">
      <section>
        <header class="ph"><button class="tog">Entity Info</button><button class="x" aria-label="Close Entity Info">×</button></header>
        <div class="entity"><p>No Selection</p></div>
      </section>
      <section>
        <header class="ph"><button class="tog">Materials</button><button class="x" aria-label="Close Materials">×</button></header>
        <div class="top">
          <div class="thumb"><svg viewBox="0 0 47 49" preserveAspectRatio="none"><path d="M0 0v49h47z" fill="#a0b0ba"/></svg></div>
          <div class="fields"><input class="dim" aria-label="Material name" value="Default" readonly></div>
          <div class="acts">
            <button aria-label="Secondary pane"><svg><use href="#pinbox"/></svg></button>
            <button aria-label="Create material"><svg class="lg"><use href="#cubeplus"/></svg></button>
            <button aria-label="Default material"><svg class="lg" viewBox="0 0 14 14"><path d="M0 0h14v14z" fill="#fff"/><path d="M0 0v14h14z" fill="#a0b0ba"/></svg></button>
          </div>
        </div>
        <div class="tabs"><button class="cur">Select</button><button>Edit</button><button class="dropper" aria-label="Sample paint"><svg><use href="#dropper"/></svg></button></div>
        <div class="nav">
          <button aria-label="Back"><svg><use href="#navback"/></svg></button><button aria-label="Forward"><svg><use href="#navfwd"/></svg></button><button aria-label="In model"><svg><use href="#home"/></svg></button>
          <label class="combo under"><select aria-label="Material library"><option>Materials&lt;1&gt;</option></select><svg><use href="#chev"/></svg></label>
          <button aria-label="Details"><svg><use href="#details"/></svg></button>
        </div>
        <div class="list mats"></div>
      </section>
      <section>
        <header class="ph"><button class="tog">Components</button><button class="x" aria-label="Close Components">×</button></header>
        <div class="top">
          <div class="thumb grey"><svg class="cubes"><use href="#cubes"/></svg></div>
          <div class="fields"><input aria-label="Component name" readonly><textarea aria-label="Component description" readonly></textarea></div>
          <div class="acts"><button aria-label="Secondary pane"><svg><use href="#pinbox"/></svg></button></div>
        </div>
        <div class="tabs tight"><button class="cur">Select</button><button>Edit</button><button>Statistics</button></div>
        <div class="nav">
          <button class="wide" aria-label="View options"><svg viewBox="0 0 14 12"><path d="M1 2h3v3H1zM6 2h3M6 4h2M1 7h3v3H1zM6 7h3M6 9h2" fill="none" stroke="#222"/><path d="M10 6h4l-2 2z"/></svg></button><button aria-label="In model"><svg><use href="#home"/></svg></button><button class="caret" aria-label="Library list"></button>
          <div class="find"><input aria-label="Search 3D Warehouse" placeholder="3D Warehouse"><button aria-label="Search components"><svg viewBox="0 0 12 12"><circle cx="7" cy="5" r="3" fill="none" stroke="#222"/><path d="M5 7l-3 4" stroke="#222" stroke-width="1.200"/></svg></button></div>
          <button aria-label="Details"><svg><use href="#details"/></svg></button>
        </div>
        <div class="list comps">
          <a href="#sampler"><svg><use href="#folder"/></svg>Components Sampler</a>
          <a href="#training"><svg><use href="#folder"/></svg>Dynamic Components Training</a>
        </div>
        <div class="foot"><button aria-label="Previous page"><svg><use href="#navback"/></svg></button><span>Components</span><button aria-label="Next page"><svg><use href="#navfwd"/></svg></button></div>
      </section>
      <section>
        <header class="ph"><button class="tog">Styles</button><button class="x" aria-label="Close Styles">×</button></header>
        <div class="top">
          <div class="thumb"><svg viewBox="0 0 36 36" preserveAspectRatio="none"><use href="#model"/><path d="M8 15C12 7 20 7 24 13M26 23C22 30 14 30 10 24" fill="none" stroke="#777" stroke-width="3"/><path d="M27 8v8h-8zM7 29v-8h8z" fill="#777"/></svg></div>
          <div class="fields white"><input aria-label="Style name" value="Construction Documentation Sty" readonly><textarea aria-label="Style description" readonly>Default face colors. Profile Edges. White background.</textarea></div>
          <div class="acts">
            <button aria-label="Secondary pane"><svg><use href="#monitor"/></svg></button>
            <button aria-label="Create style"><svg class="lg"><use href="#cubeplus"/></svg></button>
            <button aria-label="Update style"><svg><use href="#refresh"/></svg></button>
          </div>
        </div>
        <div class="tabs"><button class="cur">Select</button><button>Edit</button><button>Mix</button></div>
        <div class="nav">
          <button aria-label="Back"><svg><use href="#navback"/></svg></button><button aria-label="Forward"><svg><use href="#navfwd"/></svg></button><button aria-label="In model"><svg><use href="#home"/></svg></button>
          <label class="combo"><select aria-label="Style library"><option>Default Styles</option></select><svg><use href="#chev"/></svg></label>
          <button aria-label="Details"><svg><use href="#details"/></svg></button>
        </div>
        <div class="styles">
          <button class="sky redcyl" aria-label="Style 1"><svg><use href="#model"/></svg></button>
          <button class="gray" aria-label="Style 2"><svg><use href="#model"/></svg></button>
          <button aria-label="Style 3"><svg><use href="#model"/></svg></button>
          <button class="tan" aria-label="Style 4"><svg><use href="#model"/></svg></button>
          <button class="wire" aria-label="Style 5"><svg><use href="#model"/></svg><svg class="ck"><use href="#clock"/></svg></button>
          <button aria-label="Style 6"><svg><use href="#model"/></svg><svg class="ck"><use href="#clock"/></svg></button>
          <button class="green" aria-label="Style 7"><svg><use href="#model"/></svg></button>
          <button aria-label="Style 8"><svg><use href="#model"/></svg><svg class="ck"><use href="#clock"/></svg></button>
          <button aria-label="Style 9"><svg><use href="#model"/></svg><svg class="ck"><use href="#clock"/></svg></button>
          <button class="blue" aria-label="Style 10"><svg><use href="#model"/></svg></button>
          <button class="sky" aria-label="Style 11"><svg><use href="#model"/></svg></button>
          <button class="wire" aria-label="Style 12"><svg><use href="#model"/></svg><svg class="ck"><use href="#clock"/></svg></button>
          <button class="gray" aria-label="Style 13"><svg><use href="#model"/></svg></button>
          <button class="xray" aria-label="Style 14"><svg><use href="#model"/></svg><svg class="ck"><use href="#clock"/></svg></button>
        </div>
      </section>
    </div>
    <button class="flyout" aria-label="Expand panel"><svg viewBox="0 0 19 50"><path d="M3 .5h17V50L.5 32V3z" fill="#f1f1f1" stroke="#ccc"/><path d="M14 9l-6 6 6 6" fill="none" stroke="#3b86b5" stroke-width="3"/></svg></button>
  </aside>
</div>

<footer class="status"><i class="grip first"></i><label for="meas">Measurements</label><input id="meas" readonly></footer>
</body>
</html>
```
FILE: styles.css
```
* { box-sizing: border-box; }
body {
  margin: 0;
  min-height: 100vh;
  display: grid;
  grid-template-rows: 15px 14px 31px 1fr 29px;
  background: #fff;
  color: #111;
  font: 9px/12px "Open Sans", "Noto Sans", sans-serif;
  overflow-x: hidden;
}
button, input, select, textarea { font: inherit; color: inherit; margin: 0; padding: 0; border: 0; border-radius: 0; background: none; }
h1, h2, p { margin: 0; font-size: inherit; font-weight: normal; }
svg { display: block; }
.sprite { display: none; }

.titlebar { display: flex; align-items: center; gap: 4px; padding-left: 1px; }
.titlebar h1 { flex: 1; font: 9px/15px Roboto, "Open Sans", sans-serif; }
.logo { width: 11px; height: 11px; }
.winbtns { display: flex; }
.winbtns button { width: 34px; display: grid; place-items: center; }
.winbtns svg { width: 10px; height: 10px; }

.menubar { display: flex; gap: 9px; padding-left: 4px; }
.menubar button { line-height: 14px; white-space: nowrap; }

.toolbars { display: flex; background: #f0f0f0; border-top: 1px solid #f8f8f8; }
.bar { display: flex; align-items: center; border-right: 1px solid #bdbdbd; flex: none; }
.bar > div { display: flex; height: 25px; }
.bar button { flex: 1; display: grid; place-items: center; }
.bar svg, .palette svg { width: 18px; height: 18px; }
.palette .big { width: 20px; height: 20px; }
.grip { width: 7px; height: 24px; background: repeating-linear-gradient(#bbb 0 1px, transparent 1px 3px) 3px 0 / 2px 100% no-repeat; }
.grip.first { width: 5px; background-position: 1px 0; }
.sep { width: 1px; height: 23px; margin: 0 3px 0 2px; background: #8d8d8d; }
.n1 { width: 26px; }
.n3 { width: 77px; }
.n4 { width: 102px; }
.n5 { width: 128px; }
.n6 { width: 154px; }
.n9 { width: 230px; }
.split { width: 42px; padding: 0 4px 0 1px; }
.bar .caret { flex: 0 0 12px; }
.caret::before { content: ""; border: 4px solid transparent; border-top: 5px solid #000; border-bottom: 0; }
.on { background: #cce6f9; box-shadow: inset 0 0 0 1px #b3d8f2; }
.s-int { --a: #fff; --b: #fff; --c: #666; }
.s-sub { --b: #fff; --c: #ddd; }
.s-trim { --a: #1f7ad0; }

.workspace { display: grid; grid-template-columns: 53px 1fr 209px; min-height: 0; }
.palette { background: #f0f0f0; display: flex; flex-direction: column; }
.grip-h { height: 3px; margin: 2px 2px; background: repeating-linear-gradient(90deg, #bbb 0 1px, transparent 1px 3px); }
.palette > div { display: grid; grid-template-columns: 25px 25px; grid-auto-rows: 1fr; }
.palette button { display: grid; place-items: center; }
.palette hr { width: 48px; height: 1px; margin: 2px 0 3px 2px; border: 0; background: #8d8d8d; }
.r2 { height: 52px; }
.r3 { height: 76px; }
.r5 { height: 129px; }
.palette .last { height: 55px; padding-bottom: 3px; border-bottom: 1px solid #c4c4c4; }

.viewport { position: relative; border-left: 1px solid #444; border-top: 2px solid #6b6b6b; min-width: 0; background: #fff; margin-right: 1px; }
.viewname { position: absolute; left: 2px; top: 0; font: 8px/9px "Liberation Sans", sans-serif; }
.scene { width: 100%; height: auto; }

.tray { position: relative; background: #f0f0f0; border: solid #9db7d3; border-width: 0 4px 2px 2px; }
.tray-title { height: 20px; display: flex; align-items: center; padding: 1px 0 0 1px; background: #9bb4d2; }
.tray-title h2 { flex: 1; font-weight: 600; }
.tray-body { width: 198px; }
.x { width: 11px; height: 11px; display: grid; place-items: center; background: #fafafa; border: 1px solid #bbb; line-height: 9px; font-weight: bold; margin-right: 1px; }
.x.red { background: #c9505c; color: #fff; border-color: #c9505c; }
.ph { height: 13px; display: flex; align-items: center; justify-content: space-between; border: solid #aaa; border-width: 1px 0; background: linear-gradient(#e6e6e6, #c4c4c4); }
.tog { display: flex; align-items: center; gap: 4px; padding-left: 6px; line-height: 11px; }
.tog::before { content: ""; border: 3px solid transparent; border-top: 5px solid #000; border-bottom: 0; }
.entity { height: 137px; padding: 0 1px; }
.entity p { padding: 5px 3px 4px 2px; border-bottom: 1px solid #999; font-weight: bold; }

.top { height: 59px; display: flex; gap: 3px; padding: 3px 1px 2px 2px; border-bottom: 1px solid #aaa; }
.thumb { width: 49px; background: #fff; border: 1px solid #999; }
.thumb svg { width: 47px; height: 49px; }
.thumb.grey { background: #f0f0f0; display: grid; place-items: center; }
.thumb .cubes { width: 30px; height: 30px; }
.fields { width: 123px; display: flex; flex-direction: column; gap: 2px; font: 8px/10px "DejaVu Sans Condensed", "DejaVu Sans", sans-serif; }
.fields input, .fields textarea { width: 100%; border: 1px solid #bdbdbd; padding: 0 0 0 2px; }
.fields input { height: 14px; }
.fields textarea { flex: 1; resize: none; overflow: hidden; padding-top: 3px; display: block; }
.fields.white { gap: 0; }
.fields.white > * { background: #fff; }
.dim { color: #888; }
.acts { flex: 1; display: flex; flex-direction: column; align-items: center; gap: 5px; padding-top: 1px; }
.acts svg { width: 10px; height: 12px; }
.acts .lg { width: 14px; height: 14px; }

.tabs { height: 20px; display: flex; align-items: center; font: 8px/12px "DejaVu Sans Condensed", "DejaVu Sans", sans-serif; }
.tabs.tight { height: 18px; }
.tabs button { padding: 3px 4px 2px; margin-right: 8px; border-left: 1px solid #e2e2e2; }
.tabs .cur { padding: 2px 5px 4px; margin-right: 0; border-left: 0; background: #f8f8f8; }
.tabs .dropper { margin: 0 2px 0 auto; padding: 0; border: 0; }
.dropper svg { width: 13px; height: 13px; }

.nav { height: 21px; display: flex; align-items: center; padding: 0 1px 0 3px; font: 8px/12px "DejaVu Sans Condensed", "DejaVu Sans", sans-serif; }
.nav > button { width: 18px; display: grid; place-items: center; }
.nav > .wide { width: 24px; }
.nav > .caret { width: 12px; }
.nav svg { width: 12px; height: 12px; }
.nav .wide svg { width: 14px; height: 12px; }
.combo { flex: 1; height: 17px; display: flex; align-items: center; padding: 0 2px; margin: 2px 1px 0 1px; background: #fff; border: 1px solid #999; }
.combo select { flex: 1; min-width: 0; appearance: none; border-bottom: 1px solid transparent; }
.under select { border-bottom-color: #222; }
.combo svg { width: 8px; height: 5px; margin: 0 2px; }
.find { flex: 1; height: 15px; display: flex; border: 1px solid #999; background: #fff; }
.find input { flex: 1; min-width: 0; padding-left: 2px; }
.find input::placeholder { color: #888; opacity: 1; }
.find button { width: 14px; border-left: 1px solid #999; }
.list { background: #fff; border-top: 1px solid #999; margin-left: 2px; }
.mats { height: 148px; }
.comps { height: 142px; padding: 8px 0 0 3px; display: flex; flex-direction: column; gap: 7px; border-bottom: 1px solid #999; }
.comps a { display: flex; gap: 3px; color: #000; text-decoration: none; font: bold 9px/12px "Liberation Sans", sans-serif; white-space: nowrap; }
.comps svg { width: 48px; height: 49px; flex: none; }
.foot { height: 19px; display: flex; align-items: center; justify-content: space-between; padding: 0 2px 4px 5px; background: #fff; color: #666; font: 8px/12px "DejaVu Sans Condensed", "DejaVu Sans", sans-serif; }
.foot svg { width: 9px; height: 9px; }
.styles { height: 113px; margin-left: 2px; padding: 2px 0 0 3px; background: #fff; display: grid; grid-template-columns: repeat(5, 36px); grid-auto-rows: 36px; gap: 3px; overflow: hidden; }
.styles button { position: relative; border: 1px solid #aaa; background: #fff; }
.styles svg { width: 34px; height: 34px; }
.styles .ck { position: absolute; right: 2px; bottom: 0; width: 9px; height: 9px; }
.styles .sky { background: linear-gradient(#79b8e2, #fff 55%, #bbb 56%, #eee); }
.styles .blue { background: linear-gradient(#3d8fd0, #dceefb 55%, #a9a9ad 56%); }
.styles .gray { background: #d4d4d4; }
.styles .tan { background: linear-gradient(#b9cbd2, #dedccd 55%, #cfcbb9 56%); }
.styles .green { background: linear-gradient(#a9b8d6, #d5dbdd 50%, #94a482 51%); }
.redcyl { --cyl: #f31414; }
.wire { --cyl: #fff; }
.xray { --cyl: #eee; --side: #ccc; }
.flyout { position: absolute; right: -4px; top: 737px; }
.flyout svg { width: 19px; height: 50px; }

.status { display: flex; align-items: center; background: #f0f0f0; border-top: 1px solid #f8f8f8; }
.status label { padding: 2px 0 0 4px; }
.status input { width: 150px; height: 100%; border-right: 1px solid #aaa; }
```
